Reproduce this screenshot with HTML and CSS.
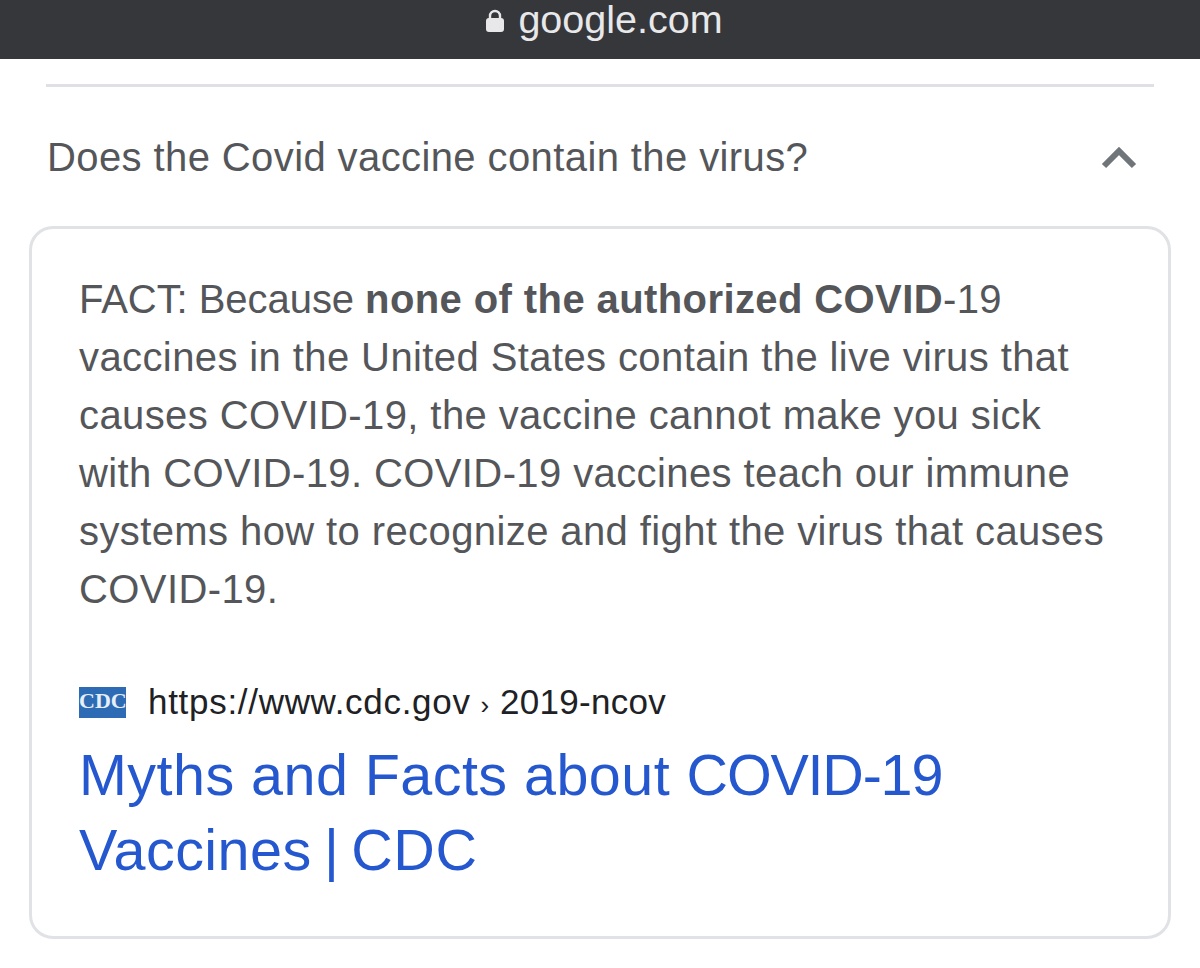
FILE: index.html
```html
<!DOCTYPE html>
<html lang="en">
<head>
    <meta charset="UTF-8">
    <title>google.com</title>
    <link rel="stylesheet" href="styles.css">
</head>
<body>
    <header class="addressbar">
        <svg class="lock" width="20" height="24" viewBox="0 0 20 24">
            <path d="M5 10V7a5 5 0 0 1 10 0v3" fill="none" stroke="#e8e8ea" stroke-width="2.4"/>
            <rect x="1" y="9" width="18" height="14" rx="3" fill="#e8e8ea"/>
        </svg>
        <span class="domain">google.com</span>
    </header>

    <main class="content">
        <div class="question">
            <span>Does the Covid vaccine contain the virus?</span>
            <svg class="chevron" width="36" height="24" viewBox="0 0 36 24">
                <path d="M3 20L18 5l15 15" fill="none" stroke="#70757a" stroke-width="6"/>
            </svg>
        </div>

        <section class="card">
            <p class="answer"><span class="lead">FACT: Because </span><b>none of the authorized COVID</b>-19 vaccines in the United States contain the live virus that causes COVID-19, the vaccine cannot make you sick with COVID-19. COVID-19 vaccines teach our immune systems how to recognize and fight the virus that causes COVID-19.</p>
            <div class="source">
                <span class="favicon">CDC</span>
                <span class="url">https://www.cdc.gov<span class="sep">›</span><span class="path">2019-ncov</span></span>
            </div>
            <a class="result-title" href="#">Myths and Facts about <span class="caps">COVID-19</span> Vaccines <span class="site">| CDC</span></a>
        </section>
    </main>
</body>
</html>
```

FILE: styles.css
```css
* {
    box-sizing: border-box;
}
body {
    margin: 0;
    background: #fff;
    font-family: "Liberation Sans", Arial, sans-serif;
}
.addressbar {
    height: 59px;
    background: #36373b;
    display: flex;
    align-items: center;
    justify-content: center;
    gap: 13px;
    padding: 0 0 21px 8px;
}
.lock {
    flex: none;
    margin-top: 3px;
}
.domain {
    color: #e8e8ea;
    font-size: 39.5px;
    line-height: 40px;
}
.content {
    padding: 25px 29px 0;
}
.question {
    margin: 0 17px;
    height: 142px;
    border-top: 3px solid #dfe1e5;
    display: flex;
    align-items: center;
    justify-content: space-between;
    padding: 2px 17px 0 1px;
    color: #54565a;
    font-size: 40px;
    letter-spacing: 0.4px;
}
.card {
    height: 713px;
    border: 3px solid #e0e2e6;
    border-radius: 24px;
    padding: 41px 54px 0 47px;
}
.answer {
    margin: 0;
    color: #54565a;
    font-size: 40px;
    line-height: 58px;
    letter-spacing: 0.4px;
}
.lead {
    letter-spacing: -0.05px;
}
.source {
    display: flex;
    align-items: center;
    gap: 22px;
    margin-top: 67px;
    height: 34px;
}
.favicon {
    width: 47px;
    height: 31px;
    background: #2d6bb5;
    color: #e6eef8;
    font-family: "Liberation Serif", serif;
    font-weight: bold;
    font-size: 22px;
    line-height: 28px;
    text-align: center;
}
.url {
    color: #202124;
    font-size: 35px;
    letter-spacing: 0.7px;
}
.sep {
    font-size: 26px;
    margin: 0 10px;
}
.path {
    letter-spacing: 0.3px;
}
.result-title {
    display: block;
    margin-top: 19px;
    color: #2558cf;
    font-size: 57.5px;
    line-height: 75px;
    letter-spacing: 0.45px;
    text-decoration: none;
}
.caps {
    letter-spacing: -1.2px;
}
.site {
    letter-spacing: 0.6px;
    word-spacing: -5px;
    margin-left: -4px;
}
```
